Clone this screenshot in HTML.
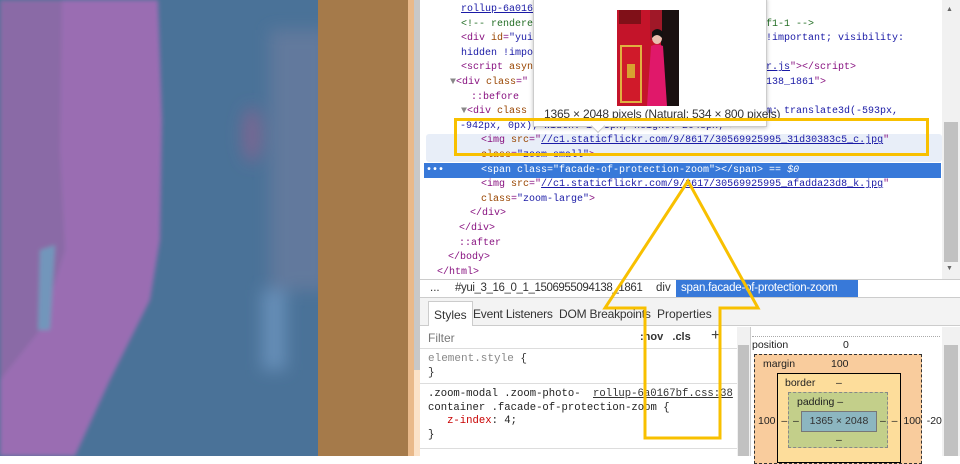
<!DOCTYPE html>
<html><head><meta charset="utf-8"><style>
*{margin:0;padding:0;box-sizing:border-box}
body{width:960px;height:456px;overflow:hidden;position:relative;background:#fff;font-family:"Liberation Sans",sans-serif}
.abs{position:absolute}
.m{font-family:"Liberation Mono",monospace;font-size:11px;white-space:pre;line-height:14.6px}
.code{position:absolute;font-family:"Liberation Mono",monospace;font-size:10px;white-space:pre;line-height:14px}
.t{color:#881280}.a{color:#994500}.v{color:#1a1aa6}.g{color:#888}.u{color:#1a1aa6;text-decoration:underline}
.c{color:#236e25}
</style></head><body>
<!-- left photo -->
<svg class="abs" style="left:0;top:0" width="320" height="456">
<defs><filter id="b" x="-50%" y="-50%" width="200%" height="200%"><feGaussianBlur stdDeviation="8"/></filter><filter id="b2" x="-20%" y="-20%" width="140%" height="140%"><feGaussianBlur stdDeviation="2"/></filter></defs>
<rect width="320" height="456" fill="#4a7298"/>
<g filter="url(#b)">
<rect x="270" y="30" width="60" height="260" fill="#7a82a2" opacity=".5"/>
<ellipse cx="252" cy="135" rx="10" ry="28" fill="#8c6290" opacity=".7"/>
<rect x="262" y="290" width="24" height="80" fill="#78a0cc" opacity=".6"/>
</g>
<g filter="url(#b2)">
<path d="M0 0 H158 L162 120 L160 240 L150 300 L110 380 L75 456 H0 Z" fill="#9a6db2"/>
<path d="M0 0 H62 L60 150 L65 250 L40 330 L0 380 Z" fill="#8a6aa6"/>
<path d="M40 250 L55 245 L50 330 L38 330 Z" fill="#7296bb"/>
</g>
</svg>
<div class="abs" style="left:318px;top:0;width:90px;height:456px;background:#a57a4a"></div>
<div class="abs" style="left:408px;top:0;width:8px;height:456px;background:#e9b98a"></div>
<div class="abs" style="left:414px;top:0;width:6px;height:370px;background:#c8c8c8"></div>
<div class="abs" style="left:414px;top:370px;width:6px;height:86px;background:#fbe2c8"></div>
<!-- devtools -->
<div class="abs" style="left:420px;top:0;width:522px;height:279px;background:#fff"></div>
<div class="abs" style="left:426px;top:134px;width:516px;height:28px;background:#e8eef8;border-radius:3px"></div>
<div class="abs" style="left:424px;top:163px;width:517px;height:15px;background:#3879d9"></div>
<div class="code" style="left:461px;top:3px"><span class="u">rollup-6a016</span></div>
<div class="code" style="left:461px;top:17.6px"><span class="c">&lt;!-- rendere</span></div>
<div class="code" style="left:461px;top:32.2px"><span class="t">&lt;div </span><span class="a">id</span><span class="t">=</span><span class="v">"yui</span></div>
<div class="code" style="left:461px;top:46.8px"><span class="v">hidden !impo</span></div>
<div class="code" style="left:461px;top:61.4px"><span class="t">&lt;script </span><span class="a">asyn</span></div>
<div class="code" style="left:450px;top:76px"><span class="g">▼</span><span class="t">&lt;div </span><span class="a">class</span><span class="t">="</span></div>
<div class="code" style="left:471px;top:90.6px"><span class="t">::before</span></div>
<div class="code" style="left:461px;top:105.2px"><span class="g">▼</span><span class="t">&lt;div </span><span class="a">class</span></div>
<div class="code" style="left:766px;top:17.6px"><span class="c">f1-1 --&gt;</span></div>
<div class="code" style="left:766px;top:32.2px"><span class="v">!important; visibility:</span></div>
<div class="code" style="left:766px;top:61.4px"><span class="u">r.js</span><span class="t">"&gt;&lt;/script&gt;</span></div>
<div class="code" style="left:766px;top:76px"><span class="v">138_1861</span><span class="t">"&gt;</span></div>
<div class="code" style="left:766px;top:105.2px"><span class="v">m: translate3d(-593px,</span></div>
<div class="code" style="left:460px;top:119.8px"><span class="v">-942px, 0px); width: 1365px; height: 2048px;"</span><span class="t">&gt;</span></div>
<div class="code" style="left:481px;top:134.4px"><span class="t">&lt;img </span><span class="a">src</span><span class="t">="</span><span class="u">//c1.staticflickr.com/9/8617/30569925995_31d30383c5_c.jpg</span><span class="t">"</span></div>
<div class="code" style="left:481px;top:149px"><span class="a">class</span><span class="t">=</span><span class="v">"zoom-small"</span><span class="t">&gt;</span></div>
<div class="code" style="left:426px;top:163.6px;color:#fff;font-weight:bold">•••</div>
<div class="code" style="left:481px;top:163.6px;color:#fff">&lt;span class="facade-of-protection-zoom"&gt;&lt;/span&gt; == <i>$0</i></div>
<div class="code" style="left:481px;top:178.2px"><span class="t">&lt;img </span><span class="a">src</span><span class="t">="</span><span class="u">//c1.staticflickr.com/9/8617/30569925995_afadda23d8_k.jpg</span><span class="t">"</span></div>
<div class="code" style="left:481px;top:192.8px"><span class="a">class</span><span class="t">=</span><span class="v">"zoom-large"</span><span class="t">&gt;</span></div>
<div class="code" style="left:470px;top:207.4px"><span class="t">&lt;/div&gt;</span></div>
<div class="code" style="left:459px;top:222px"><span class="t">&lt;/div&gt;</span></div>
<div class="code" style="left:459px;top:236.6px"><span class="t">::after</span></div>
<div class="code" style="left:448px;top:251.2px"><span class="t">&lt;/body&gt;</span></div>
<div class="code" style="left:437px;top:265.8px"><span class="t">&lt;/html&gt;</span></div>
<!-- scrollbar top -->
<div class="abs" style="left:942px;top:0;width:18px;height:279px;background:#f1f1f1"></div>
<div class="abs" style="left:944px;top:122px;width:14px;height:140px;background:#c1c1c1"></div>
<div class="abs" style="left:946px;top:6px;color:#666;font-size:7px">▲</div>
<div class="abs" style="left:946px;top:265px;color:#666;font-size:7px">▼</div>
<!-- breadcrumb -->
<div class="abs" style="left:420px;top:279px;width:540px;height:19px;border-top:1px solid #ccc;border-bottom:1px solid #ccc;background:#fff;font-size:11.5px;line-height:17px;color:#333;white-space:nowrap">
<span style="position:absolute;left:10px">...</span>
<span style="position:absolute;left:35px;letter-spacing:-0.4px">#yui_3_16_0_1_1506955094138_1861</span>
<span style="position:absolute;left:236px">div</span>
<span style="position:absolute;left:256px;top:0;height:17px;width:182px;background:#3879d9;color:#fff;padding-left:5px;letter-spacing:-0.2px">span.facade-of-protection-zoom</span>
</div>
<!-- tabs -->
<div class="abs" style="left:420px;top:298px;width:540px;height:28px;background:#f3f3f3;border-bottom:1px solid #ccc;font-size:12px;color:#333;white-space:nowrap">
<span style="position:absolute;left:8px;top:3px;height:25px;padding:6px 5px;background:#fff;border:1px solid #ccc;border-bottom:none">Styles</span>
<span style="position:absolute;left:53px;top:9px;letter-spacing:-0.2px">Event Listeners</span>
<span style="position:absolute;left:139px;top:9px;letter-spacing:-0.2px">DOM Breakpoints</span>
<span style="position:absolute;left:237px;top:9px">Properties</span>
</div>
<!-- styles -->
<div class="abs" style="left:420px;top:327px;width:317px;height:129px;font-size:12px">
<span class="abs" style="left:8px;top:4px;color:#777">Filter</span>
<span class="abs" style="left:220px;top:4px;font-weight:bold;color:#333;font-size:11px">:hov &nbsp; .cls</span>
<span class="abs" style="left:291px;top:0;font-size:16px;color:#444">+</span>
<div class="abs" style="left:0;top:21px;width:317px;border-top:1px solid #ddd"></div>
<div class="abs m" style="left:8px;top:25px;color:#333;line-height:14px"><span class="g">element.style</span> {
}</div>
<div class="abs" style="left:0;top:56px;width:317px;border-top:1px solid #ddd"></div>
<div class="abs m" style="left:8px;top:61px;color:#222;line-height:13.5px;font-size:10.6px">.zoom-modal .zoom-photo-
container .facade-of-protection-zoom {
   <span style="color:#c80000">z-index</span>: 4;
}</div>
<div class="abs m u" style="left:173px;top:61px;color:#333;line-height:13.5px;font-size:10.6px">rollup-6a0167bf.css:38</div>
<div class="abs" style="left:0;top:121px;width:317px;border-top:1px solid #ddd"></div>
</div>
<div class="abs" style="left:737px;top:327px;width:13px;height:129px;background:#f1f1f1"></div>
<div class="abs" style="left:738px;top:345px;width:11px;height:111px;background:#c1c1c1"></div>
<div class="abs" style="left:750px;top:327px;width:1px;height:129px;background:#ccc"></div>
<!-- box model -->
<div class="abs" style="left:942px;top:327px;width:18px;height:129px;background:#f1f1f1"></div>
<div class="abs" style="left:944px;top:345px;width:14px;height:111px;background:#c1c1c1"></div>
<div class="abs" style="left:752px;top:336px;width:188px;border-top:1px dotted #aaa"></div>
<div class="abs" style="left:752px;top:339px;font-size:10.5px;color:#222">position</div>
<div class="abs" style="left:843px;top:339px;font-size:10.5px;color:#222">0</div>
<div class="abs" style="left:754px;top:354px;width:168px;height:110px;background:#f9cc9d;border:1px dashed #333"></div>
<div class="abs" style="left:763px;top:358px;font-size:10.5px;color:#222">margin</div>
<div class="abs" style="left:831px;top:358px;font-size:10.5px;color:#222">100</div>
<div class="abs" style="left:777px;top:373px;width:124px;height:90px;background:#fddd9b;border:1px solid #000"></div>
<div class="abs" style="left:785px;top:377px;font-size:10.5px;color:#222">border</div>
<div class="abs" style="left:836px;top:377px;font-size:10.5px;color:#222">–</div>
<div class="abs" style="left:788px;top:392px;width:100px;height:56px;background:#c3cf8a;border:1px dashed #888"></div>
<div class="abs" style="left:797px;top:396px;font-size:10.5px;color:#222">padding –</div>
<div class="abs" style="left:801px;top:411px;width:76px;height:21px;background:#8cb6c0;border:1px solid #777;font-size:10.5px;color:#333;text-align:center;line-height:19px">1365 × 2048</div>
<div class="abs" style="left:758px;top:415px;font-size:10.5px;color:#222">100 &nbsp;– &nbsp;–</div>
<div class="abs" style="left:880px;top:415px;font-size:10.5px;color:#222">– &nbsp;– &nbsp;100 &nbsp;-20</div>
<div class="abs" style="left:836px;top:434px;font-size:10.5px;color:#222">–</div>
<!-- tooltip -->
<div class="abs" style="left:533px;top:-2px;width:234px;height:129px;background:#fff;border:1px solid #ccc;box-shadow:0 1px 4px rgba(0,0,0,.25)"></div>
<div class="abs" style="left:593px;top:121px;width:10px;height:10px;background:#fff;border-right:1px solid #ccc;border-bottom:1px solid #ccc;transform:rotate(45deg)"></div>
<svg class="abs" style="left:617px;top:10px" width="62" height="96">
<rect width="62" height="96" fill="#c4142a"/>
<rect x="2" y="0" width="22" height="14" fill="#801018"/>
<rect x="4" y="36" width="20" height="56" fill="#d01a2a" stroke="#e0b040" stroke-width="2"/>
<rect x="10" y="54" width="8" height="14" fill="#d8a030"/>
<rect x="44" y="0" width="18" height="96" fill="#1a1010"/>
<rect x="33" y="0" width="12" height="30" fill="#a01828"/>
<ellipse cx="40" cy="28" rx="5" ry="6" fill="#e8c0b0"/>
<path d="M35 22 Q40 16 46 22 L45 28 Q40 22 35 28Z" fill="#111"/>
<path d="M34 36 Q40 33 46 36 L50 96 H30 Z" fill="#e0186a"/>
</svg>
<div class="abs" style="left:544px;top:107px;font-size:12px;color:#333;white-space:nowrap;letter-spacing:-0.2px">1365 × 2048 pixels (Natural: 534 × 800 pixels)</div>
<!-- yellow annotations -->
<svg class="abs" style="left:0;top:0" width="960" height="456">
<rect x="455.5" y="119.5" width="472" height="35" fill="none" stroke="#f8c000" stroke-width="3"/>
<path d="M688 181 L605 308 H645 V438 H720 V308 H758 Z" fill="none" stroke="#f8c000" stroke-width="3" stroke-linejoin="miter"/>
</svg>
</body></html>
